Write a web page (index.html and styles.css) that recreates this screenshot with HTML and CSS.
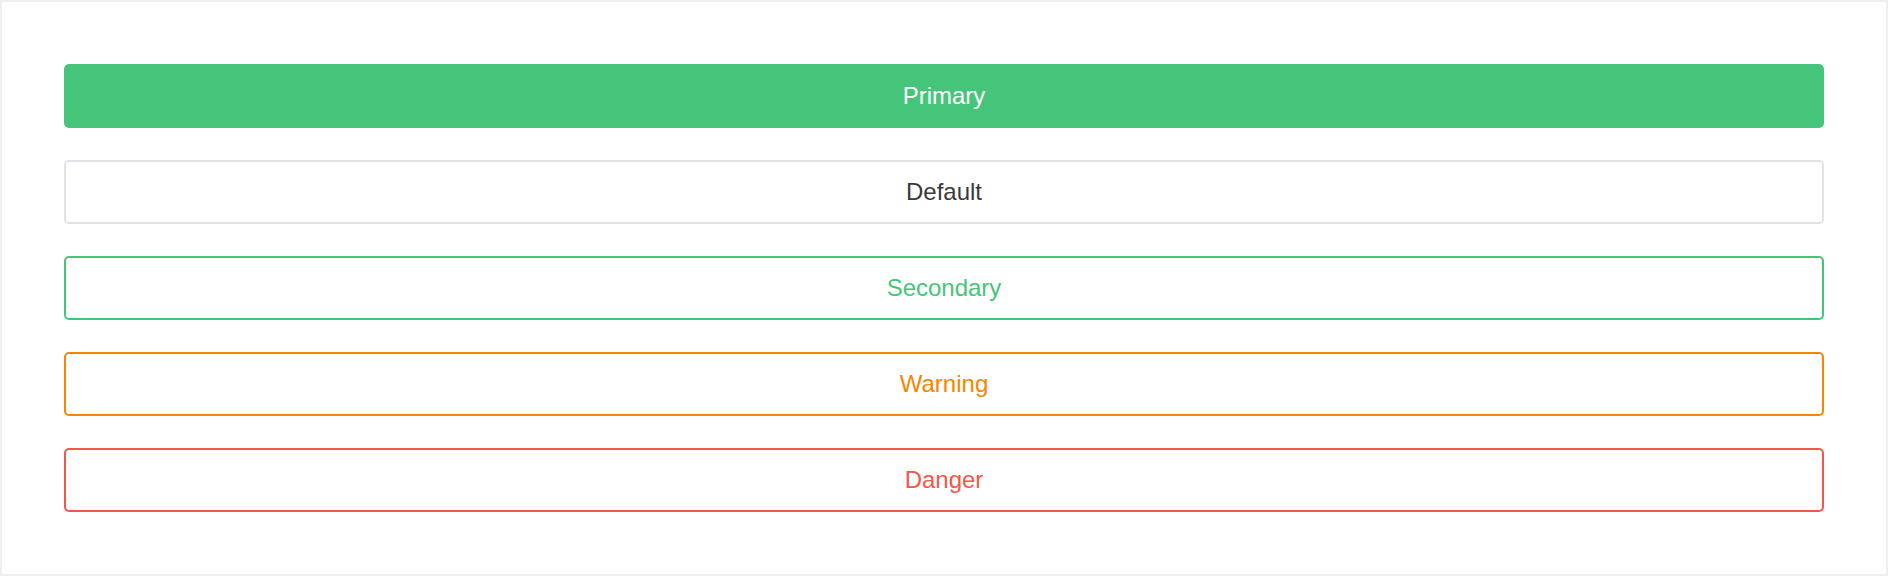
FILE: index.html
```html
<!DOCTYPE html>
<html>
<head>
<meta charset="utf-8">
<link rel="stylesheet" href="styles.css">
</head>
<body>
<div class="frame">
  <button class="btn btn-primary">Primary</button>
  <button class="btn btn-default">Default</button>
  <button class="btn btn-secondary">Secondary</button>
  <button class="btn btn-warning">Warning</button>
  <button class="btn btn-danger">Danger</button>
</div>
</body>
</html>
```
FILE: styles.css
```css
html, body {
  margin: 0;
  padding: 0;
  background: #ffffff;
}
.frame {
  box-sizing: border-box;
  width: 1888px;
  height: 576px;
  border: 2px solid #eeeef3;
  padding: 62px;
  display: flex;
  flex-direction: column;
  gap: 32px;
  background: #ffffff;
}
.btn {
  box-sizing: border-box;
  width: 100%;
  height: 64px;
  border-radius: 5px;
  border: 2px solid transparent;
  background: #ffffff;
  font-family: "Liberation Sans", Arial, sans-serif;
  font-size: 24px;
  padding: 0;
  margin: 0;
  display: flex;
  align-items: center;
  justify-content: center;
}
.btn-primary {
  background: #45c57a;
  border-color: #45c57a;
  color: #ffffff;
}
.btn-default {
  border-color: #e2e2e6;
  color: #3a3a3a;
}
.btn-secondary {
  border-color: #45c57a;
  color: #45c57a;
}
.btn-warning {
  border-color: #f78500;
  color: #f78500;
}
.btn-danger {
  border-color: #f5564a;
  color: #f5564a;
}
```
